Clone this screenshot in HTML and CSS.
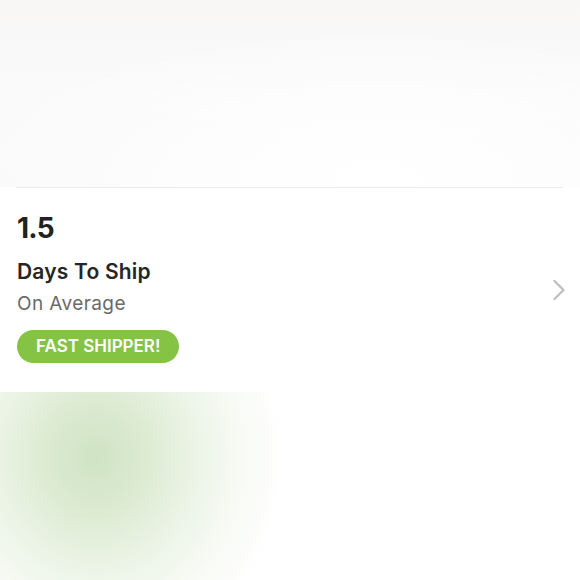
FILE: index.html
```html
<!DOCTYPE html>
<html>
<head>
<meta charset="utf-8">
<link rel="stylesheet" href="styles.css">
</head>
<body>
<div class="page">
  <div class="hero"></div>
  <div class="divider"></div>
  <div class="card">
    <div class="info">
      <div class="value">1.5</div>
      <div class="title">Days To Ship</div>
      <div class="sub">On Average</div>
      <div class="badge">FAST SHIPPER!</div>
    </div>
    <svg class="chevron" width="14" height="22" viewBox="0 0 14 22">
      <path d="M2.5 2 L11.5 11 L2.5 20" fill="none" stroke="#bdbdbd" stroke-width="2.2" stroke-linecap="round" stroke-linejoin="round"/>
    </svg>
  </div>
  <div class="footer"></div>
</div>
</body>
</html>
```
FILE: styles.css
```css
html, body {
  margin: 0;
  padding: 0;
  background: #ffffff;
}
.page {
  width: 580px;
  height: 580px;
  overflow: hidden;
  font-family: "Inter", "Open Sans", sans-serif;
}
.hero {
  height: 187px;
  background:
    radial-gradient(ellipse 420px 150px at 65% 95%, #ffffff 0%, rgba(255,255,255,0.6) 55%, rgba(255,255,255,0) 100%),
    linear-gradient(180deg, #f8f7f6 0%, #fbfafb 50%, #f9f9f9 100%);
}
.divider {
  height: 1px;
  margin: 0 17px 0 16px;
  background: #ececea;
}
.card {
  height: 204px;
  display: flex;
  align-items: center;
  justify-content: space-between;
  padding: 0 14px 0 17px;
  box-sizing: border-box;
  background: #ffffff;
}
.info {
  display: flex;
  flex-direction: column;
  align-items: flex-start;
  align-self: flex-start;
  padding-top: 23px;
}
.value {
  font-size: 28px;
  font-weight: 700;
  color: #222222;
  line-height: 34px;
  letter-spacing: -0.8px;
}
.title {
  font-size: 21px;
  font-weight: 600;
  color: #262626;
  line-height: 26px;
  margin-top: 14px;
  letter-spacing: 0.2px;
}
.sub {
  font-size: 19px;
  color: #6a6a6a;
  line-height: 24px;
  margin-top: 7px;
  letter-spacing: 0.4px;
}
.badge {
  margin-top: 14px;
  height: 33px;
  padding: 0 19px;
  border-radius: 17px;
  background: #84c343;
  color: #ffffff;
  font-size: 17px;
  font-weight: 600;
  line-height: 33px;
}
.chevron {
  display: block;
}
.footer {
  height: 188px;
  background: radial-gradient(ellipse 190px 210px at 95px 65px, #d0e3c3 0%, #dbead1 25%, #eaf3e4 50%, #f7faf4 75%, #ffffff 100%);
}
```
